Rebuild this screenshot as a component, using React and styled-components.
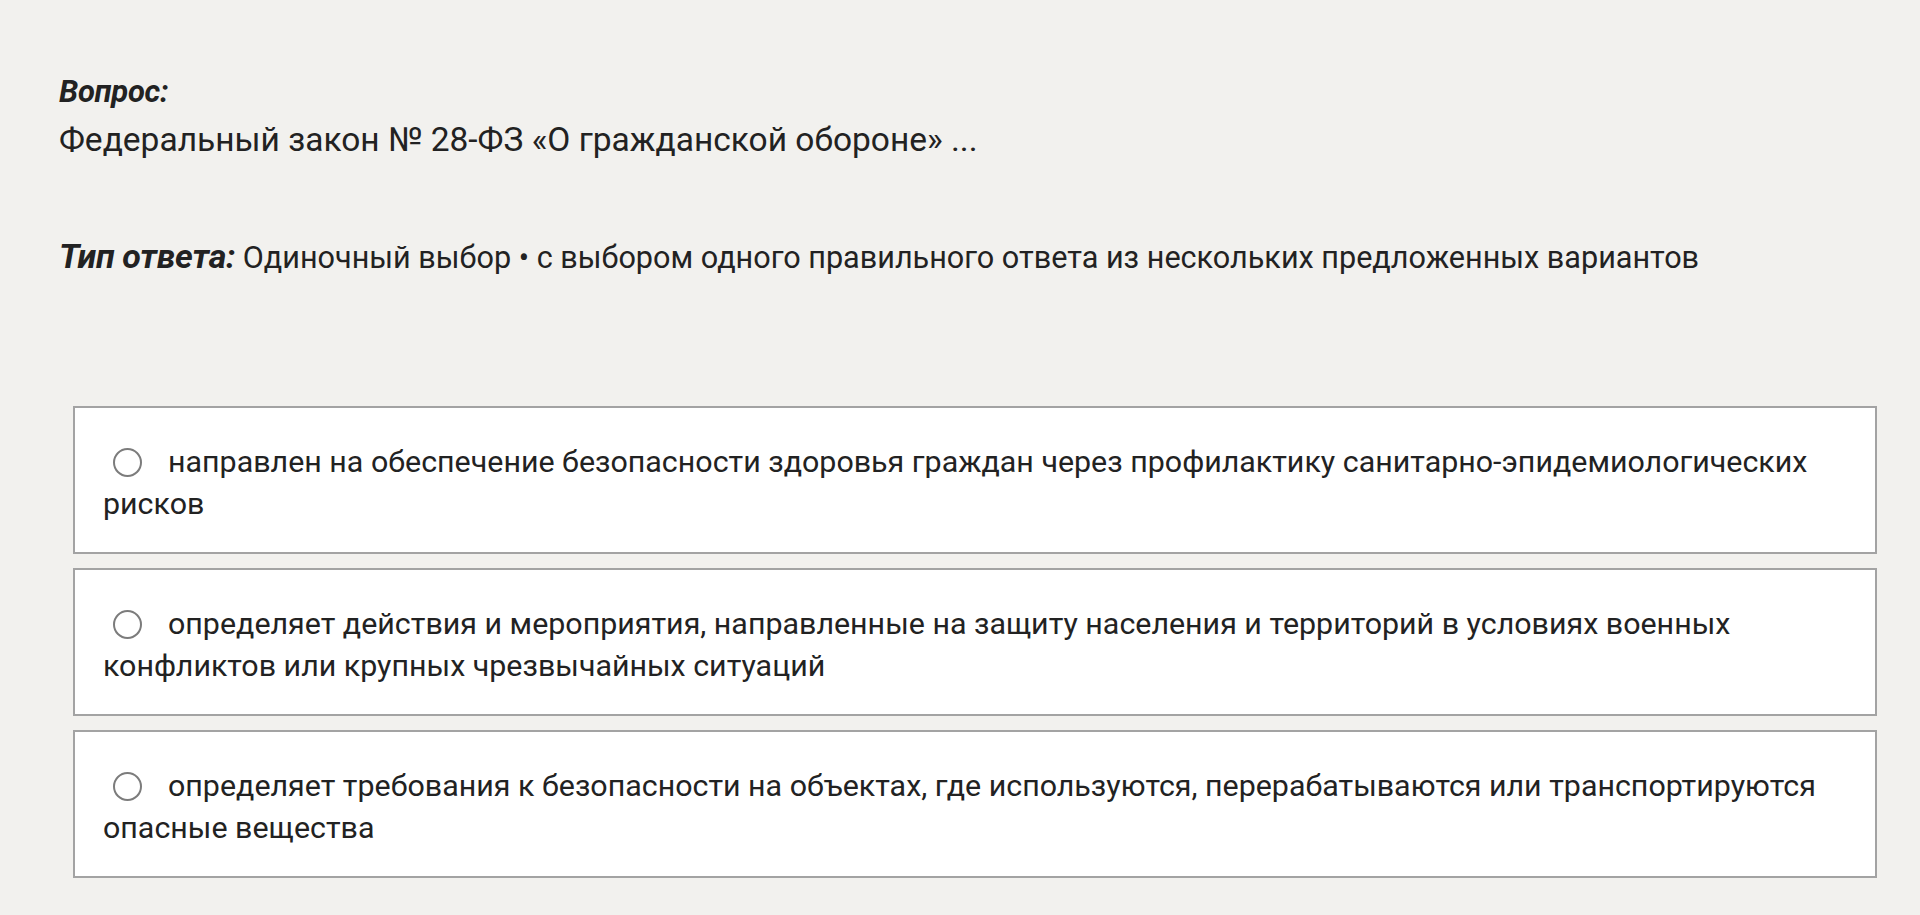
import React from "react";
import styled, { createGlobalStyle } from "styled-components";

const Global = createGlobalStyle`
  html, body { margin: 0; padding: 0; background: #f2f1ee; }
  body { font-family: Roboto, "Open Sans", sans-serif; color: #222; }
`;

const Page = styled.div`
  padding: 72px 43px 40px 59px;
  box-sizing: border-box;
  min-height: 915px;
`;

const Label = styled.div`
  font-weight: 700;
  font-style: italic;
  font-size: 31px;
  line-height: 40px;
  letter-spacing: -0.3px;
`;

const Question = styled.div`
  font-size: 33.5px;
  line-height: 44px;
  margin-top: 6px;
`;

const TypeLine = styled.div`
  margin-top: 72px;
  font-size: 30.6px;
  line-height: 44px;
`;

const TypeLabel = styled.span`
  font-weight: 700;
  font-style: italic;
  font-size: 34px;
  letter-spacing: -0.3px;
`;

const Options = styled.div`
  margin-top: 126px;
  margin-left: 14px;
  display: flex;
  flex-direction: column;
  gap: 14px;
`;

const Option = styled.label`
  display: block;
  background: #fff;
  border: 2px solid #a3a3a3;
  padding: 33px 16px 27px 28px;
  font-size: 30.4px;
  line-height: 42px;
  cursor: pointer;
`;

const Radio = styled.span`
  display: inline-block;
  width: 29px;
  height: 29px;
  border: 2px solid #7c7c7c;
  border-radius: 50%;
  box-sizing: border-box;
  vertical-align: -5px;
  margin: 0 26px 0 10px;
  background: #fff;
`;

const options = [
  "направлен на обеспечение безопасности здоровья граждан через профилактику санитарно-эпидемиологических рисков",
  "определяет действия и мероприятия, направленные на защиту населения и территорий в условиях военных конфликтов или крупных чрезвычайных ситуаций",
  "определяет требования к безопасности на объектах, где используются, перерабатываются или транспортируются опасные вещества",
];

export default function App() {
  return (
    <>
      <Global />
      <Page>
        <Label>Вопрос:</Label>
        <Question>Федеральный закон № 28-ФЗ «О гражданской обороне» ...</Question>
        <TypeLine>
          <TypeLabel>Тип ответа:</TypeLabel> Одиночный выбор • с выбором одного правильного ответа из нескольких предложенных вариантов
        </TypeLine>
        <Options>
          {options.map((t) => (
            <Option key={t}>
              <Radio />
              {t}
            </Option>
          ))}
        </Options>
      </Page>
    </>
  );
}
